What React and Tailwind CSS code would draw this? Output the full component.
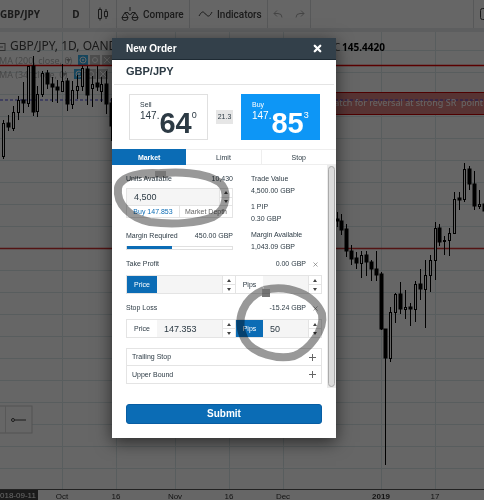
import { useState } from "react";
import { X } from "lucide-react";

// x, high, low, body top, body bottom, filled
const candles = [
  [3, 120, 159, 123, 156, 0],
  [8, 115, 131, 123, 127, 1],
  [13, 106, 131, 112, 128, 0],
  [18, 96, 120, 100, 112, 0],
  [23, 82, 113, 100, 103, 1],
  [28, 66, 107, 66, 103, 0],
  [33, 56, 116, 66, 112, 1],
  [37, 86, 117, 94, 111, 0],
  [42, 71, 97, 73, 94, 0],
  [47, 70, 89, 73, 84, 1],
  [52, 77, 102, 84, 87, 1],
  [57, 80, 103, 87, 90, 1],
  [62, 64, 91, 81, 91, 0],
  [67, 78, 111, 81, 104, 1],
  [72, 81, 109, 90, 104, 0],
  [77, 75, 99, 86, 90, 0],
  [82, 66, 91, 68, 86, 0],
  [87, 66, 105, 69, 95, 1],
  [92, 76, 107, 84, 88, 0],
  [97, 66, 91, 83, 87, 1],
  [101, 77, 102, 84, 91, 0],
  [106, 71, 114, 84, 104, 1],
  [111, 98, 141, 103, 126, 1],
  [337, 212, 227, 219, 221, 1],
  [341, 214, 235, 221, 230, 1],
  [346, 224, 257, 229, 251, 1],
  [351, 245, 265, 251, 259, 1],
  [356, 252, 269, 258, 263, 1],
  [361, 251, 278, 255, 263, 0],
  [366, 251, 276, 255, 262, 1],
  [371, 260, 281, 262, 269, 1],
  [376, 251, 281, 269, 275, 1],
  [381, 272, 330, 274, 329, 1],
  [385, 329, 465, 329, 358, 1],
  [390, 307, 362, 312, 358, 0],
  [395, 293, 323, 294, 312, 0],
  [400, 282, 314, 294, 309, 1],
  [405, 290, 319, 307, 309, 0],
  [410, 303, 326, 307, 309, 1],
  [415, 281, 322, 284, 309, 0],
  [420, 269, 300, 284, 289, 1],
  [425, 260, 328, 275, 289, 0],
  [430, 255, 292, 260, 275, 0],
  [435, 222, 280, 228, 260, 0],
  [439, 224, 246, 228, 242, 1],
  [444, 236, 255, 240, 241, 0],
  [449, 228, 256, 233, 240, 0],
  [454, 192, 233, 199, 233, 0],
  [459, 192, 210, 198, 200, 1],
  [464, 163, 202, 169, 199, 0],
  [469, 166, 190, 169, 184, 1],
  [474, 171, 210, 184, 206, 1],
  [479, 190, 209, 204, 206, 0],
  [484, 199, 221, 204, 211, 1],
];

const rows = [50, 72, 94, 116, 138, 160, 182, 204, 226, 248, 270, 292, 314, 336, 358, 380, 402, 424, 446, 468];

const dates = [
  [62, "Oct"],
  [116, "16"],
  [175, "Nov"],
  [229, "16"],
  [283, "Dec"],
  [381, "2019"],
  [435, "17"],
];

function Toolbar() {
  const cell = "flex items-center border-r border-[#dadddf]";
  return (
    <div className="flex h-8 shrink-0 border-b-4 border-[#e9ecee] bg-white text-[10px] text-[#444]">
      <button className={`${cell} w-[63px] font-bold`}>GBP/JPY</button>
      <button className={`${cell} w-[27px] justify-center font-bold`}>D</button>
      <button className={`${cell} w-[27px] justify-center`} aria-label="Candles">
        <svg width="12" height="14" fill="none" stroke="currentColor">
          <path d="M1.5 2.5h3v9h-3zM3 .5v2M3 11.5v2M7.5 4.5h3v5h-3zM9 2v2.5M9 9.5V12" />
        </svg>
      </button>
      <button className={`${cell} w-[73px] gap-1 pl-1 font-[Roboto,sans-serif] font-medium`}>
        <svg className="shrink-0" width="18" height="16" fill="none" stroke="currentColor">
          <path d="M9 1v4M4 6.500h3a2 2 0 0 0 4 0h3M4 6.500l-3 5h6zM14 6.500l-3 5h6zM1 11.500a3 3 0 0 0 6 0M11 11.500a3 3 0 0 0 6 0" />
        </svg>
        Compare
      </button>
      <button className={`${cell} w-[78px] gap-1 pl-2 font-[Roboto,sans-serif] font-medium`}>
        <svg className="shrink-0" width="15" height="10" fill="none" stroke="currentColor">
          <path d="M1 7c3-5 4-5 6.500-2s4 3 6.500-2" />
        </svg>
        Indicators
      </button>
      <div className={`${cell} w-[43px] justify-center gap-3 text-[#aaa]`}>
        <button aria-label="Undo">
          <svg width="10" height="9" fill="none" stroke="currentColor">
            <path d="M4 .5l-3 3 3 3M1 3.500h4a4 4 0 0 1 4 4" />
          </svg>
        </button>
        <button aria-label="Redo">
          <svg width="10" height="9" fill="none" stroke="currentColor">
            <path d="M6 .5l3 3-3 3M9 3.500H5a4 4 0 0 0-4 4" />
          </svg>
        </button>
      </div>
      <div className={`${cell} min-w-0 flex-1`} />
      <div className="flex w-[10px] items-center justify-end">
        <svg width="4" height="12" fill="none" stroke="currentColor">
          <path d="M6 .5H2.500a2 2 0 0 0-2 2v7a2 2 0 0 0 2 2H6" />
        </svg>
      </div>
    </div>
  );
}

function Study({ y, name, x }) {
  return (
    <g>
      <text x="-1" y={y + 4} fontSize="9" fill="#b4b4b4">{name}</text>
      <path d={`M${x - 17} ${y - 1}h5l-2.500 3z`} fill="#999" />
      <rect x={x - 5} y={y - 5} width="10" height="10" fill="#3baee8" />
      <circle cx={x} cy={y} r="3" fill="none" stroke="#fff" />
      <circle cx={x} cy={y} r="1" fill="#fff" />
      <rect x={x + 7} y={y - 5} width="10" height="10" fill="#c4c4c4" />
      <circle cx={x + 12} cy={y} r="2.500" fill="none" stroke="#fff" />
      <rect x={x + 19} y={y - 5} width="10" height="10" fill="#c4c4c4" />
      <path d={`M${x + 21} ${y - 3}l6 6m0-6l-6 6`} stroke="#fff" />
    </g>
  );
}

function Candle({ x, high, low, top, bottom, filled }) {
  return (
    <g stroke="#000">
      <path d={`M${x + 0.5} ${high}V${top}M${x + 0.5} ${bottom}V${low}`} />
      {filled ? (
        <rect x={x - 1} y={top} width="3" height={bottom - top} fill="#000" />
      ) : (
        <rect x={x - 0.5} y={top + 0.5} width="2" height={bottom - top} fill="#fff" />
      )}
    </g>
  );
}

function Chart() {
  return (
    <svg className="h-[468px] w-full" fontFamily="Noto Sans, sans-serif">
      <g transform="translate(0 -32)">
        {rows.map((y) => (
          <line key={y} x1="0" x2="100%" y1={y + 0.5} y2={y + 0.5} stroke="#dbe8ec" />
        ))}
        {dates.map(([x]) => (
          <line key={x} x1={x + 0.5} x2={x + 0.5} y1="32" y2="489" stroke="#dbe8ec" />
        ))}
        <Study y={60} name="MA (200, close, 0)" x={83} />
        <Study y={74} name="MA (34, close, 0)" x={79} />
        <rect x="330" y="92" width="100%" height="23" fill="#d98080" />
        <path d="M330 92.500h2000M330 114.500h2000" stroke="#c40000" />
        <line x1="0" x2="100%" y1="100" y2="100" stroke="#4444dd" strokeDasharray="3 2" />
        <line x1="0" x2="100%" y1="65.500" y2="65.500" stroke="#e00000" strokeWidth="1.500" />
        <line x1="0" x2="100%" y1="248.500" y2="248.500" stroke="#d03030" strokeWidth="1.500" />
        {candles.map(([x, high, low, top, bottom, filled]) => (
          <Candle key={x} x={x} high={high} low={low} top={top} bottom={bottom} filled={filled} />
        ))}
        <rect x="-4" y="43.500" width="9" height="7" fill="#fff" stroke="#777" />
        <path d="M0 47h3" stroke="#777" />
        <text x="10" y="50" fontSize="12" fill="#444">GBP/JPY, 1D, OANDA</text>
        <text x="334" y="51" fontSize="10" fill="#555">C</text>
        <text x="342" y="51" fontSize="10" fontWeight="bold" fill="#000">145.4420</text>
        <text x="326" y="106" fontSize="9" fill="#fff">Watch for reversal at strong SR&nbsp; point</text>
        <rect x="-10" y="406" width="42" height="27" fill="#fff" stroke="#ccc" />
        <path d="M5.500 406v27" stroke="#ddd" />
        <circle cx="13" cy="420" r="1.500" fill="none" stroke="#444" />
        <path d="M15 420h11" stroke="#444" />
        <line x1="0" x2="100%" y1="489.500" y2="489.500" stroke="#555" />
        <g fontFamily="Liberation Sans, sans-serif" fontSize="8">
          {dates.map(([x, label]) => (
            <text key={x} x={x} y="499" textAnchor="middle" fill="#333" fontWeight={label === "2019" ? "bold" : "normal"}>
              {label}
            </text>
          ))}
          <rect x="0" y="490" width="38" height="10" fill="#444" />
          <text x="0" y="498" fill="#fff">018-09-11</text>
        </g>
      </g>
    </svg>
  );
}

function PriceCard({ side, pips, frac, buy }) {
  return (
    <button
      className={`flex h-[46px] w-[79px] flex-col border pl-[10px] pt-[6px] text-left ${
        buy ? "border-[#0d96f6] bg-[#0d96f6] text-white" : "border-[#e0e0e0] bg-white text-[#2c3a44]"
      }`}
    >
      <span className="text-[7px] leading-[8px]">{side}</span>
      <span className="flex items-start">
        <span className="text-[10px] leading-[13px]">147.</span>
        <span className="text-[29px] font-bold leading-[28px]">{pips}</span>
        <span className="text-[9px] leading-[13px]">{frac}</span>
      </span>
    </button>
  );
}

function Spinner() {
  return (
    <span className="flex w-[13px] shrink-0 flex-col border-l border-[#e4e4e4] bg-white">
      <button className="flex flex-1 items-center justify-center border-b border-[#e4e4e4]" aria-label="Increase">
        <svg width="4" height="3"><path d="M0 3l2-3 2 3z" fill="#444" /></svg>
      </button>
      <button className="flex flex-1 items-center justify-center" aria-label="Decrease">
        <svg width="4" height="3"><path d="M0 0l2 3 2-3z" fill="#444" /></svg>
      </button>
    </span>
  );
}

function Field({ id, label, value, active, className }) {
  const [text, setText] = useState(value);
  return (
    <div className={`flex h-[19px] border border-[#e4e4e4] ${className}`}>
      <label
        htmlFor={id}
        className={`flex shrink-0 items-center justify-center ${label === "Price" ? "w-[30px]" : "w-[27px]"} ${
          active ? "bg-[#0b6cb5] text-white" : "bg-white"
        }`}
      >
        {label}
      </label>
      <input
        id={id}
        value={text}
        onChange={(e) => setText(e.target.value)}
        className="w-0 min-w-0 flex-1 bg-[#f5f5f5] pl-[7px] text-[9px] outline-none"
      />
      <Spinner />
    </div>
  );
}

function Limit({ title, amount, id, price, pips, active }) {
  return (
    <div>
      <div className="flex h-3 items-center">
        <span className="flex-1">{title}</span>
        <span>{amount}</span>
        <button className="ml-[6px] mr-2" aria-label={`Clear ${title}`}>
          <X size={7} color="#666" />
        </button>
      </div>
      <div className="mt-[5px] flex">
        <Field id={`${id}-price`} label="Price" value={price} active={active === "price"} className="w-[110px]" />
        <Field id={`${id}-pips`} label="Pips" value={pips} active={active === "pips"} className="-ml-px w-[87px]" />
      </div>
    </div>
  );
}

function OrderForm() {
  const [units, setUnits] = useState("4,500");
  return (
    <div className="flex h-[223px] text-[7px] leading-[12px]">
      <div className="flex-1 pl-[14px] pt-2">
        <div className="flex">
          <div className="w-[107px]">
            <div className="flex justify-between">
              <label htmlFor="units">Units Available</label>
              <span>10,430</span>
            </div>
            <div className="mt-[3px] flex h-[18px] border border-[#e4e4e4]">
              <input
                id="units"
                value={units}
                onChange={(e) => setUnits(e.target.value)}
                className="w-0 flex-1 bg-[#f5f5f5] pl-[7px] text-[9px] outline-none"
              />
              <Spinner />
            </div>
            <div className="flex h-3 border border-t-0 border-[#e4e4e4] leading-[11px]">
              <button className="flex-1 border-r border-[#e4e4e4] text-[#0b6cb5]">Buy 147.853</button>
              <button className="flex-1 text-[#666]">Market Depth</button>
            </div>
            <div className="mt-3 flex justify-between">
              <span>Margin Required</span>
              <span>450.00 GBP</span>
            </div>
            <div className="mt-1 h-1 border border-[#e0e0e0]">
              <div className="-mt-px h-[3px] w-[45px] bg-[#0b6cb5]" />
            </div>
          </div>
          <div className="ml-[18px]">
            <p>Trade Value</p>
            <p>4,500.00 GBP</p>
            <p className="mt-1">1 PIP</p>
            <p>0.30 GBP</p>
            <p className="mt-1">Margin Available</p>
            <p>1,043.09 GBP</p>
          </div>
        </div>
        <div className="mt-[5px] flex flex-col gap-2">
          <Limit title="Take Profit" amount="0.00 GBP" id="tp" price="" pips="" active="price" />
          <Limit title="Stop Loss" amount="-15.24 GBP" id="sl" price="147.353" pips="50" active="pips" />
        </div>
        <div className="mt-[10px] w-[196px] border border-[#e4e4e4]">
          {["Trailing Stop", "Upper Bound"].map((name) => (
            <button key={name} className="flex h-[17px] w-full items-center justify-between border-b border-[#e4e4e4] px-[5px] last:border-b-0">
              {name}
              <svg width="7" height="7"><path d="M3.500 0v7M0 3.500h7" stroke="#666" /></svg>
            </button>
          ))}
        </div>
      </div>
      <div className="w-[9px] bg-[#ececec] px-px py-px">
        <div className="h-full rounded-full border border-[#aaa] bg-[#dcdcdc]" />
      </div>
    </div>
  );
}

// Pen circles drawn around the units and pips inputs
function PenMarks() {
  return (
    <svg
      className="pointer-events-none absolute inset-0 h-full w-full mix-blend-multiply"
      fill="none"
      stroke="#999"
    >
      <path
        d="M54 136C30 133 8 138 6 150C4 166 18 180 38 184C62 187 86 185 101 179C116 171 117 152 107 144C94 135 66 132 34 137"
        strokeWidth="8"
        strokeLinecap="round"
      />
      <path
        d="M152 252C176 246 202 256 210 276C213 292 197 312 182 318C166 322 142 316 133 302C122 281 132 260 152 252"
        strokeWidth="8"
      />
      <path d="M43 133h11v6h-11zM150 251h8v8h-8z" fill="#777" stroke="none" />
    </svg>
  );
}

export default function App() {
  return (
    <div className="relative flex min-h-screen flex-col overflow-hidden bg-white font-['Noto_Sans',sans-serif]">
      <Toolbar />
      <Chart />
      <div className="absolute inset-0 bg-black/60" />
      <div
        role="dialog"
        aria-label="New Order"
        className="absolute left-28 top-[38px] w-56 bg-white font-['Liberation_Sans',Arial,sans-serif] text-[#2c3a44] shadow-[0_4px_16px_rgba(0,0,0,0.6)]"
      >
        <div className="flex h-[22px] items-center justify-between border-b border-[#1e2a33] bg-[#33404a] pl-[14px] pr-[13px] text-white">
          <h1 className="text-[10px] font-bold">New Order</h1>
          <button aria-label="Close">
            <X size={11} strokeWidth={5} />
          </button>
        </div>
        <h2 className="mx-[2px] h-[25px] border-b border-[#e4e4e4] pl-3 text-[11px] font-bold leading-[23px]">GBP/JPY</h2>
        <div className="flex items-center justify-between py-[9px] pl-[17px] pr-4">
          <PriceCard side="Sell" pips="64" frac="0" />
          <span className="bg-[#e6e6e6] px-[2px] text-[7px] leading-[14px]">21.3</span>
          <PriceCard side="Buy" pips="85" frac="3" buy />
        </div>
        <div className="flex h-4 text-[7px] leading-[15px]">
          <button className="flex-1 bg-[#0b6cb5] font-bold text-white">Market</button>
          <button className="flex-1 border-y border-r border-[#eee]">Limit</button>
          <button className="flex-1 border-y border-[#eee]">Stop</button>
        </div>
        <OrderForm />
        <div className="px-[14px] pb-[14px] pt-4">
          <button className="block h-5 w-full rounded-[3px] border border-[#075da3] bg-[#0b6cb5] text-[10px] font-bold leading-[18px] text-white">
            Submit
          </button>
        </div>
        <PenMarks />
      </div>
    </div>
  );
}
